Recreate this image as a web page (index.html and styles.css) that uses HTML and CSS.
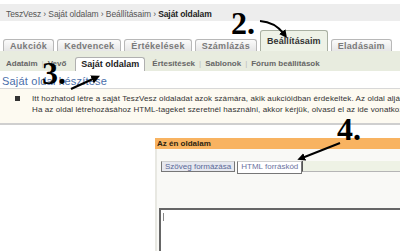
FILE: index.html
```html
<!DOCTYPE html>
<html lang="hu">
<head>
    <meta charset="UTF-8">
    <meta name="viewport" content="width=device-width, initial-scale=1.0">
    <title>Saját oldalam - TeszVesz</title>
    <link rel="stylesheet" href="styles.css">
</head>
<body>
<div class="page">
    <div class="crumbs">TeszVesz › Saját oldalam › Beállításaim › <b>Saját oldalam</b></div>

    <ul class="tabs">
        <li class="tab">Aukciók</li>
        <li class="tab">Kedvencek</li>
        <li class="tab">Értékelések</li>
        <li class="tab">Számlázás</li>
        <li class="tab active">Beállításaim</li>
        <li class="tab">Eladásaim</li>
    </ul>

    <div class="subbar">
        <span class="sub">Adataim</span><span class="sep">|</span>
        <span class="sub">Vevő</span>
        <span class="sub active">Saját oldalam</span>
        <span class="sub">Értesítések</span><span class="sep">|</span>
        <span class="sub">Sablonok</span><span class="sep">|</span>
        <span class="sub">Fórum beállítások</span>
    </div>

    <h3 class="title">Saját oldal készítése</h3>

    <ul class="note">
        <li>Itt hozhatod létre a saját TeszVesz oldaladat azok számára, akik aukcióidban érdekeltek. Az oldal aljára<br>
        Ha az oldal létrehozásához HTML-tageket szeretnél használni, akkor kérjük, olvasd el az ide vonatkozó :</li>
    </ul>

    <div class="editor">
        <div class="editor-head">Az én oldalam</div>
        <div class="editor-body">
            <div class="modes">
                <span class="mode">Szöveg formázása</span>
                <span class="mode current">HTML forráskód</span>
                <span class="mode-rest"></span>
            </div>
            <div class="source"><span class="caret"></span></div>
        </div>
    </div>

    <!-- jelölések a képernyőképen -->
    <div class="mark mark-2">2.</div>
    <div class="mark mark-3">3.</div>
    <div class="mark mark-4">4.</div>
    <svg class="arrows" viewBox="0 0 400 251">
        <defs>
            <marker id="head" markerWidth="4" markerHeight="4" refX="1.5" refY="2" orient="auto">
                <path d="M0 0 L4 2 L0 4 Z" fill="#000"/>
            </marker>
        </defs>
        <path d="M260 21 Q275 22 284 34" stroke="#000" stroke-width="2" fill="none" marker-end="url(#head)"/>
        <path d="M71 89 L95 78" stroke="#000" stroke-width="2.2" fill="none" marker-end="url(#head)"/>
        <path d="M340 143 L302 158" stroke="#000" stroke-width="2" fill="none" marker-end="url(#head)"/>
    </svg>
</div>
</body>
</html>
```

FILE: styles.css
```css
* {
    box-sizing: border-box;
}
body {
    margin: 0;
    font-family: "Liberation Sans", Arial, sans-serif;
    background: #fff;
    color: #333;
}
.page {
    position: relative;
    width: 400px;
    height: 251px;
    overflow: hidden;
}
.crumbs {
    margin-top: 4px;
    height: 17px;
    padding: 3px 0 0 6px;
    line-height: 14px;
    background: #ededed;
    font-size: 8.5px;
    letter-spacing: -0.1px;
    color: #555;
    white-space: nowrap;
}
.crumbs b {
    color: #222;
}
.tabs {
    display: flex;
    align-items: flex-end;
    gap: 3px;
    height: 21px;
    margin: 9px 0 0;
    padding: 0 0 0 3px;
    list-style: none;
}
.tab {
    height: 12px;
    line-height: 12px;
    padding: 0 6px;
    border: 1px solid #b8b8b8;
    border-bottom: none;
    border-radius: 3px 3px 0 0;
    background: linear-gradient(#fbfbfb, #e6e6e6);
    font-size: 9px;
    font-weight: bold;
    color: #7a7a7a;
    letter-spacing: 0.3px;
    white-space: nowrap;
}
.tab.active {
    height: 21px;
    line-height: 21px;
    background: #eef2e7;
    border-color: #a9b0a2;
    color: #333;
    letter-spacing: 0.1px;
}
.subbar {
    display: flex;
    align-items: flex-end;
    height: 20px;
    padding-left: 2px;
    background: #e8ecdf;
    font-size: 8px;
    font-weight: bold;
    color: #666;
    white-space: nowrap;
}
.sub {
    padding: 0 4px 3px;
}
.sep {
    padding-bottom: 3px;
    font-weight: normal;
    color: #bbb;
}
.sub.active {
    height: 14px;
    line-height: 13px;
    margin: 0 3px 0 5px;
    padding: 0 5px;
    background: #fff;
    border: 1px solid #b0b0b0;
    border-bottom: none;
    border-radius: 3px 3px 0 0;
    font-size: 9px;
    color: #222;
}
.title {
    height: 17px;
    margin: 0;
    padding: 4px 0 0 2px;
    line-height: 13px;
    font-size: 11px;
    font-weight: normal;
    color: #4a6eaa;
    letter-spacing: 0.2px;
}
.note {
    height: 37px;
    margin: 0;
    padding: 4px 0 0 32px;
    list-style: none;
    border-top: 1px solid #d8d8d8;
    border-bottom: 2px solid #cfcfcf;
    background: #fdfaf1;
    font-size: 8px;
    line-height: 11px;
    letter-spacing: 0.1px;
    color: #333;
    white-space: nowrap;
}
.note li {
    position: relative;
}
.note li::before {
    content: "";
    position: absolute;
    left: -17px;
    top: 3px;
    width: 5px;
    height: 5px;
    background: #333;
}
.editor {
    margin: 13px 0 0 155px;
}
.editor-head {
    height: 11px;
    line-height: 11px;
    padding-left: 2px;
    background: #f8b361;
    font-size: 8px;
    font-weight: bold;
    color: #2e2410;
}
.editor-body {
    height: 102px;
    padding: 12px 0 0 2px;
    background: #f9f9f6;
    border-left: 2px solid #e8e8e2;
}
.modes {
    display: flex;
    height: 11px;
    margin-left: 2px;
    font-size: 8px;
    line-height: 9px;
    white-space: nowrap;
}
.mode {
    padding: 0 3px;
    border: 1px solid #777;
    border-top-color: #d0d0d0;
    background: #e6e8ef;
    color: #5a6898;
}
.mode.current {
    height: 13px;
    margin-left: 2px;
    background: #fff;
    color: #6c73a0;
}
.mode-rest {
    flex: 1;
    background: #eef2e5;
    border-left: 1px solid #555;
    border-bottom: 1px solid #b5b5b5;
}
.source {
    height: 50px;
    margin-top: 36px;
    padding: 3px 0 0 2px;
    background: #fff;
    border-top: 2px solid #666;
    border-left: 2px solid #666;
}
.caret {
    display: block;
    width: 1px;
    height: 8px;
    background: #888;
}
.mark {
    position: absolute;
    font-family: "Liberation Serif", "Times New Roman", serif;
    font-size: 32px;
    line-height: 32px;
    font-weight: bold;
    color: #000;
}
.mark-2 {
    left: 231px;
    top: 7px;
}
.mark-3 {
    left: 42px;
    top: 57px;
}
.mark-4 {
    left: 337px;
    top: 113px;
}
.arrows {
    position: absolute;
    left: 0;
    top: 0;
    width: 400px;
    height: 251px;
}
```
